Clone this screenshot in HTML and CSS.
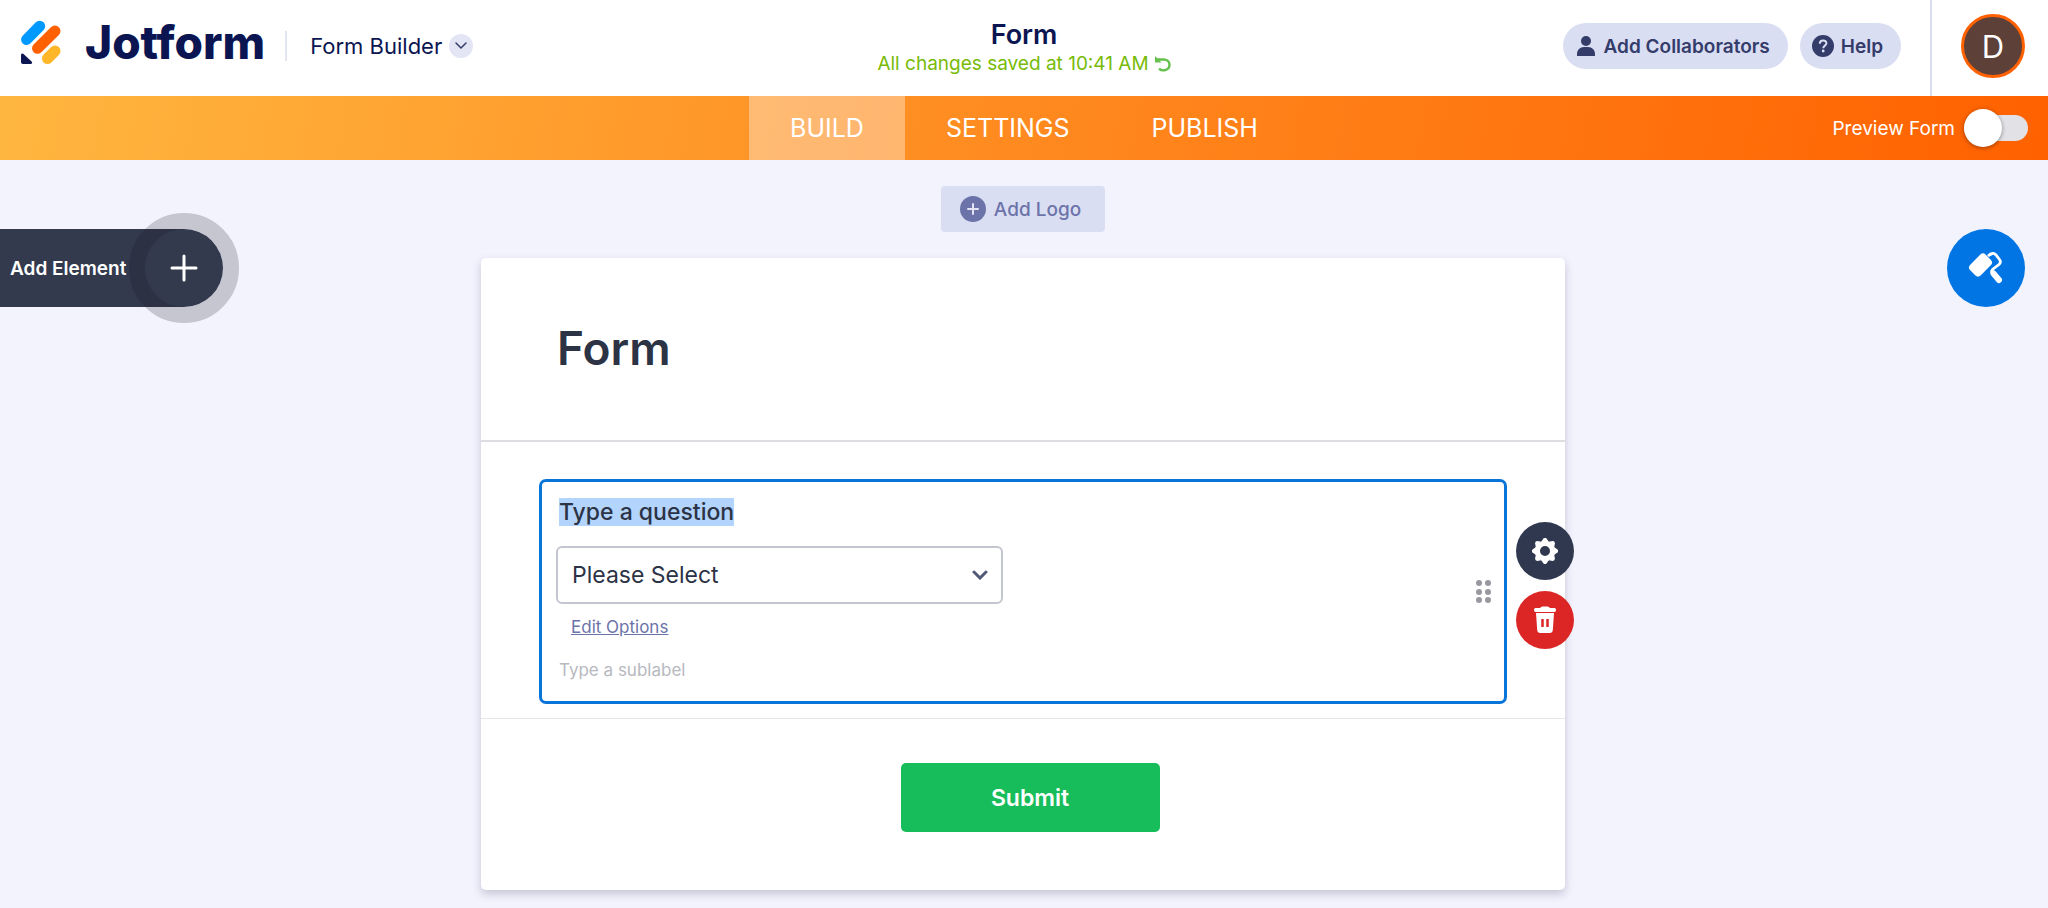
FILE: index.html
```html
<!DOCTYPE html>
<html lang="en">
<head>
    <meta charset="UTF-8">
    <meta name="viewport" content="width=device-width, initial-scale=1.0">
    <title>Form Builder</title>
    <link rel="stylesheet" href="styles.css">
</head>
<body>
    <header class="header">
        <div class="header-left">
            <a class="logo" href="#">
                <svg width="40" height="44" viewBox="0 0 40 44" aria-hidden="true">
                    <g fill="none" stroke-width="11" stroke-linecap="round">
                        <path stroke="#0099ff" d="M5.600 19.500L18.700 6.200"/>
                        <path stroke="#ff6100" d="M16.500 28.300L34 11"/>
                        <path stroke="#ffb629" d="M26.500 38.500L34 31"/>
                    </g>
                    <path fill="#0a1551" d="M0 35.500C0 33.500 1.500 33 2.800 34.200L10.600 41.600C11.800 42.900 11 44 9.500 44H2C.800 44 0 43.200 0 42Z"/>
                </svg>
                <span class="logo-text">Jotform</span>
            </a>
            <button class="product" type="button">
                Form Builder
                <span class="product-arrow">
                    <svg width="12" height="8" viewBox="0 0 12 8"><path d="M1 1l5 5 5-5" fill="none" stroke="#343c6a" stroke-width="1.500" stroke-linecap="round"/></svg>
                </span>
            </button>
        </div>
        <div class="header-center">
            <h1 class="form-name">Form</h1>
            <p class="saved">
                All changes saved at 10:41 AM
                <svg width="16" height="16" viewBox="0 0 16 16" aria-hidden="true">
                    <path d="M2 3.500H8.500C12 3.500 14.500 5.500 14.500 8.700C14.500 14 8 16 4 12.800" fill="none" stroke="#64c04b" stroke-width="2.400"/>
                    <path d="M0 0v6.500h6.500z" fill="#64c04b"/>
                </svg>
            </p>
        </div>
        <div class="header-right">
            <button class="pill" type="button">
                <svg width="18" height="20" viewBox="0 0 18 20"><circle cx="9" cy="5" r="5"/><path d="M0 20v-2c0-4 3-7 7-7h4c4 0 7 3 7 7v2z"/></svg>
                Add Collaborators
            </button>
            <button class="pill pill-help" type="button">
                <svg width="22" height="22" viewBox="0 0 22 22"><circle cx="11" cy="11" r="11"/><path d="M7.800 8.700c0-4.200 6.600-4.200 6.600-.400 0 2.400-3.200 2.300-3.200 5" fill="none" stroke="#dadef3" stroke-width="2"/><circle cx="11.200" cy="16" r="1.400" fill="#dadef3"/></svg>
                Help
            </button>
            <div class="account">
                <button class="avatar" type="button">D</button>
            </div>
        </div>
    </header>

    <div class="toolbar">
        <nav class="tabs">
            <a class="tab active" href="#">BUILD</a>
            <a class="tab" href="#">SETTINGS</a>
            <a class="tab" href="#">PUBLISH</a>
        </nav>
        <label class="preview">
            Preview Form
            <input class="toggle" type="checkbox">
        </label>
    </div>

    <main class="stage">
        <button class="add-element" type="button">
            Add Element
            <svg width="28" height="28" viewBox="0 0 28 28"><path d="M14 2v24M2 14h24" stroke="#fff" stroke-width="3" stroke-linecap="round"/></svg>
        </button>
        <button class="designer" type="button" aria-label="Form Designer">
            <svg width="36" height="36" viewBox="0 0 36 36">
                <rect x="-11" y="-7.500" width="22" height="15" rx="4" fill="#fff" transform="translate(12.500 15) rotate(-45)"/>
                <path d="M20 6Q25 1.500 28 5L31.500 9.500Q33.500 12 31 14.500L24.500 19.500Q22.500 22 25 24" fill="none" stroke="#fff" stroke-width="2.800"/>
                <path d="M25.500 23.500L31 30" stroke="#fff" stroke-width="6" stroke-linecap="round"/>
            </svg>
        </button>

        <button class="add-logo" type="button">
            <svg width="26" height="26" viewBox="0 0 26 26"><circle cx="13" cy="13" r="13" fill="#6c73a8"/><path d="M13 8v10M8 13h10" stroke="#e3e5f5" stroke-width="2" stroke-linecap="round"/></svg>
            Add Logo
        </button>

        <form class="card">
            <div class="card-header">
                <h2>Form</h2>
            </div>
            <div class="card-body">
                <div class="question">
                    <label class="question-label" for="answer">Type a question</label>
                    <div class="select-wrap">
                        <select id="answer">
                            <option>Please Select</option>
                        </select>
                        <svg class="select-arrow" width="16" height="10" viewBox="0 0 16 10"><path d="M2 2l6 6 6-6" fill="none" stroke="#535a78" stroke-width="3" stroke-linecap="round"/></svg>
                    </div>
                    <a class="edit-options" href="#">Edit Options</a>
                    <span class="sublabel">Type a sublabel</span>

                    <svg class="drag" width="16" height="24" viewBox="0 0 16 24" fill="#97999f">
                        <circle cx="3" cy="3" r="3"/><circle cx="12" cy="3" r="3"/>
                        <circle cx="3" cy="12" r="3"/><circle cx="12" cy="12" r="3"/>
                        <circle cx="3" cy="20" r="3"/><circle cx="12" cy="20" r="3"/>
                    </svg>
                    <div class="actions">
                        <button class="action" type="button" aria-label="Properties">
                            <svg width="26" height="26" viewBox="-13 -13 26 26" fill="#fff">
                                <circle r="7.500" fill="none" stroke="#fff" stroke-width="5"/>
                                <path id="tooth" d="M-4-9L-1.500-12.500Q0-13.800 1.500-12.500L4-9z"/>
                                <use href="#tooth" transform="rotate(45)"/>
                                <use href="#tooth" transform="rotate(90)"/>
                                <use href="#tooth" transform="rotate(135)"/>
                                <use href="#tooth" transform="rotate(180)"/>
                                <use href="#tooth" transform="rotate(225)"/>
                                <use href="#tooth" transform="rotate(270)"/>
                                <use href="#tooth" transform="rotate(315)"/>
                            </svg>
                        </button>
                        <button class="action action-delete" type="button" aria-label="Delete">
                            <svg width="22" height="28" viewBox="0 0 22 28">
                                <path fill="#fff" d="M1.500 2H6q1-1.500 2.500-1.500h5q1.500 0 2.500 1.500h4.500q1.500 0 1.500 2t-1.500 2h-19q-1.500 0-1.500-2t1.500-2zM2 7h18l-1.200 17q-.300 3-3 3H6.200q-2.700 0-3-3z"/>
                                <path d="M8.500 13v8M13.500 13v8" stroke="#dc2626" stroke-width="2.500"/>
                            </svg>
                        </button>
                    </div>
                </div>
            </div>
            <div class="card-footer">
                <button class="submit" type="button">Submit</button>
            </div>
        </form>
    </main>
</body>
</html>
```
FILE: styles.css
```css
*,
*::before,
*::after {
    box-sizing: border-box;
}

body {
    margin: 0;
    min-height: 100vh;
    background-color: #f3f3fe;
    font-family: Inter, "Liberation Sans", sans-serif;
    color: #0a1551;
}

h1, h2, p {
    margin: 0;
}

button {
    border: 0;
    padding: 0;
    font-family: inherit;
    color: inherit;
    cursor: pointer;
}

svg {
    flex-shrink: 0;
}

/* header */
.header {
    display: grid;
    grid-template-columns: 1fr auto 1fr;
    height: 96px;
    background-color: #fff;
}

.header-left {
    display: flex;
    align-items: center;
    padding: 0 0 4px 21px;
}

.logo {
    display: flex;
    align-items: center;
    gap: 24px;
    padding-bottom: 8px;
    color: #0a1551;
    text-decoration: none;
}

.logo-text {
    font-size: 46px;
    font-weight: 800;
    line-height: 48px;
}

.product {
    display: flex;
    align-items: center;
    gap: 7px;
    height: 30px;
    margin-left: 20px;
    padding-left: 23px;
    border-left: 2px solid #e3e5f5;
    background: none;
    font-size: 22px;
    font-weight: 400;
}

.product-arrow {
    display: flex;
    align-items: center;
    justify-content: center;
    width: 24px;
    height: 24px;
    border-radius: 50%;
    background-color: #e3e5f5;
}

.header-center {
    padding-top: 19px;
    text-align: center;
}

.form-name {
    font-size: 27px;
    font-weight: 600;
    line-height: 32px;
}

.saved {
    display: flex;
    align-items: center;
    justify-content: center;
    gap: 6px;
    font-size: 19px;
    line-height: 26px;
    color: #78bb07;
}

.header-right {
    display: flex;
    align-items: center;
    justify-content: flex-end;
    gap: 12px;
}

.pill {
    display: flex;
    align-items: center;
    gap: 9px;
    height: 46px;
    margin-bottom: 4px;
    padding: 0 18px 0 14px;
    border-radius: 23px;
    background-color: #dadef3;
    font-size: 19px;
    font-weight: 600;
    color: #343c6a;
    fill: #343c6a;
}

.pill-help {
    gap: 7px;
    padding-left: 12px;
}

.account {
    height: 96px;
    margin-left: 17px;
    padding: 14px 23px 0 29px;
    border-left: 2px solid #dadef3;
}

.avatar {
    width: 64px;
    height: 64px;
    border: 3px solid #ff6100;
    border-radius: 50%;
    background-color: #5d4037;
    font-size: 31px;
    color: #fff;
}

/* orange bar */
.toolbar {
    display: grid;
    grid-template-columns: 1fr auto 1fr;
    height: 64px;
    background: linear-gradient(100deg, #ffb640 0%, #ff8a1f 50%, #ff6100 100%);
    color: #fff;
}

.tabs {
    display: flex;
    grid-column: 2;
}

.tab {
    padding: 0 41px;
    font-size: 25px;
    line-height: 64px;
    color: #fff;
    text-decoration: none;
}

.tab.active {
    background-color: rgba(255, 255, 255, 0.35);
}

.preview {
    display: flex;
    align-items: center;
    justify-content: flex-end;
    gap: 9px;
    padding-right: 20px;
    font-size: 19px;
}

.toggle {
    appearance: none;
    position: relative;
    width: 64px;
    height: 26px;
    margin: 0;
    border-radius: 13px;
    background-color: #e2e2e6;
}

.toggle::before {
    content: "";
    position: absolute;
    top: -6px;
    left: 0;
    width: 38px;
    height: 38px;
    border-radius: 50%;
    background-color: #fff;
    box-shadow: 0 1px 4px rgba(0, 0, 0, 0.4);
}

/* canvas */
.stage {
    position: relative;
    display: flex;
    flex-direction: column;
    align-items: center;
    gap: 26px;
    padding: 26px 102px 18px 100px;
}

.add-element {
    position: absolute;
    top: 69px;
    left: 0;
    display: flex;
    align-items: center;
    justify-content: space-between;
    width: 223px;
    height: 78px;
    padding: 0 25px 0 10px;
    border-radius: 0 39px 39px 0;
    background-color: #333a4d;
    font-size: 19px;
    font-weight: 600;
    color: #fff;
}

/* ring round the plus */
.add-element::after {
    content: "";
    position: absolute;
    top: -16px;
    right: -16px;
    width: 110px;
    height: 110px;
    border: 16px solid rgba(20, 20, 30, 0.2);
    border-radius: 50%;
}

.designer {
    position: absolute;
    top: 69px;
    right: 23px;
    display: flex;
    align-items: center;
    justify-content: center;
    width: 78px;
    height: 78px;
    border-radius: 50%;
    background-color: #0075e3;
}

.add-logo {
    display: flex;
    align-items: center;
    gap: 8px;
    height: 46px;
    padding: 0 24px 0 19px;
    border-radius: 4px;
    background-color: #dadef3;
    font-size: 19px;
    font-weight: 500;
    color: #6c73a8;
}

.card {
    width: 100%;
    max-width: 1084px;
    border-radius: 5px;
    background-color: #fff;
    box-shadow: 0 4px 8px rgba(60, 60, 90, 0.25);
}

.card-header {
    padding: 61px 76px 63px;
    border-bottom: 2px solid #dedee2;
}

.card-header h2 {
    font-size: 46px;
    font-weight: 600;
    line-height: 58px;
    color: #2c3345;
}

.card-body {
    padding: 37px 58px 14px;
    border-bottom: 1px solid #e6e6ea;
}

.question {
    position: relative;
    display: flex;
    flex-direction: column;
    align-items: flex-start;
    padding: 16px 14px 19px;
    border: 3px solid #0a75d8;
    border-radius: 7px;
    color: #2c3345;
}

.question-label {
    margin-left: 3px;
    background-color: #b3d4fd;
    font-size: 23px;
    font-weight: 500;
    line-height: 28px;
}

.select-wrap {
    position: relative;
    width: 447px;
    max-width: 100%;
    margin-top: 20px;
}

.select-wrap select {
    appearance: none;
    display: block;
    width: 100%;
    height: 58px;
    padding: 0 48px 0 14px;
    border: 2px solid #c3c6ce;
    border-radius: 6px;
    background-color: #fff;
    font-family: inherit;
    font-size: 23px;
    color: #2c3345;
}

.select-arrow {
    position: absolute;
    top: 24px;
    right: 15px;
    pointer-events: none;
}

.edit-options {
    margin: 11px 0 0 15px;
    font-size: 17px;
    line-height: 24px;
    color: #6c73a8;
}

.sublabel {
    margin: 19px 0 0 3px;
    font-size: 17px;
    line-height: 24px;
    color: #b7b9bf;
}

.drag {
    position: absolute;
    top: 98px;
    right: 12px;
}

.actions {
    position: absolute;
    top: 40px;
    right: -70px;
    display: flex;
    flex-direction: column;
    gap: 11px;
}

.action {
    display: flex;
    align-items: center;
    justify-content: center;
    width: 58px;
    height: 58px;
    border-radius: 50%;
    background-color: #303850;
}

.action-delete {
    background-color: #dc2626;
}

.card-footer {
    display: flex;
    justify-content: center;
    padding: 44px 0 58px 14px;
}

.submit {
    width: 259px;
    height: 69px;
    border-radius: 5px;
    background-color: #18bd5b;
    font-size: 23px;
    font-weight: 600;
    color: #fff;
}
```
